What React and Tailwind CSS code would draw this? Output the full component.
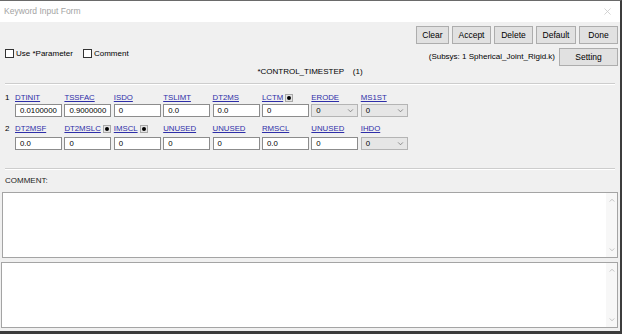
import React from "react";

const row1 = [
  { label: "DTINIT", value: "0.0100000" },
  { label: "TSSFAC", value: "0.9000000" },
  { label: "ISDO", value: "0" },
  { label: "TSLIMT", value: "0.0" },
  { label: "DT2MS", value: "0.0" },
  { label: "LCTM", value: "0", dot: true },
  { label: "ERODE", value: "0", select: true },
  { label: "MS1ST", value: "0", select: true },
];

const row2 = [
  { label: "DT2MSF", value: "0.0" },
  { label: "DT2MSLC", value: "0", dot: true },
  { label: "IMSCL", value: "0", dot: true },
  { label: "UNUSED", value: "0" },
  { label: "UNUSED", value: "0" },
  { label: "RMSCL", value: "0.0" },
  { label: "UNUSED", value: "0" },
  { label: "IHDO", value: "0", select: true },
];

const Chevron = ({ up = false, className = "" }) => (
  <svg viewBox="0 0 8 5" className={className} fill="none" stroke="currentColor" strokeWidth="1">
    {up ? <path d="M1 4.5 L4 1.5 L7 4.5" /> : <path d="M1 0.5 L4 3.5 L7 0.5" />}
  </svg>
);

const DotButton = () => (
  <span className="ml-[2px] flex h-[8px] w-[8px] items-center justify-center border border-[#a8a8a8] bg-[#e4e4e4]">
    <span className="h-[4px] w-[4px] rounded-full bg-black" />
  </span>
);

const Field = ({ item, labelClass }) => (
  <div className="flex flex-col">
    <div className={`flex items-center ${labelClass}`}>
      <span className="text-[7.8px] leading-none text-[#2e2ea8] underline">{item.label}</span>
      {item.dot && <DotButton />}
    </div>
    {item.select ? (
      <div className="flex h-[13px] w-[47px] items-center justify-between border border-[#b4b4b4] bg-[#e6e6e6] pl-[4px] pr-[3px]">
        <span className="text-[7.8px] leading-none text-black">{item.value}</span>
        <Chevron className="h-[4px] w-[7px] text-[#777]" />
      </div>
    ) : (
      <div className="flex h-[13px] w-[47px] items-center border border-[#8c8c8c] bg-white pl-[4px]">
        <span className="text-[7.8px] leading-none text-black">{item.value}</span>
      </div>
    )}
  </div>
);

const FieldRow = ({ num, items, labelClass, className }) => (
  <div className={`flex ${className}`}>
    <div className={`flex w-[15px] items-center pl-[5px] ${labelClass}`}>
      <span className="text-[8px] leading-none text-black">{num}</span>
    </div>
    <div className="grid grid-cols-[repeat(8,49.4px)]">
      {items.map((item, i) => (
        <Field key={i} item={item} labelClass={labelClass} />
      ))}
    </div>
  </div>
);

const Btn = ({ children, w }) => (
  <button className={`flex h-[18px] items-center justify-center border border-[#adadad] bg-[#e1e1e1] text-[8.5px] text-black ${w}`}>
    {children}
  </button>
);

const TextBox = ({ className }) => (
  <div className={`flex h-[66px] border border-[#a4a4a4] bg-white ${className}`}>
    <div className="flex-1" />
    <div className="flex w-[11px] flex-col items-center justify-between bg-[#f7f7f7] py-[5px]">
      <Chevron up className="h-[4px] w-[6px] text-[#b0b0b0]" />
      <Chevron className="h-[4px] w-[6px] text-[#b0b0b0]" />
    </div>
  </div>
);

const Separator = ({ className }) => (
  <div className={`mx-[5px] border-t border-b border-t-[#cdcdcd] border-b-white ${className}`} />
);

export default function App() {
  return (
    <div
      className="flex h-[334px] w-[622px] flex-col overflow-hidden border-t border-r-2 border-b-[3px] border-t-[#6a6a6a] border-r-[#3c3c3c] border-b-[#3c3c3c] bg-[#f0f0f0]"
      style={{ fontFamily: '"Liberation Sans", Arial, sans-serif' }}
    >
      <div className="flex h-[21px] items-center justify-between bg-white pl-[4px] pr-[9px]">
        <span className="text-[8.5px] text-[#a3a3a3]">Keyword Input Form</span>
        <svg viewBox="0 0 8 8" className="h-[7px] w-[7px] text-[#c8c8c8]" stroke="currentColor" strokeWidth="0.9">
          <path d="M0.5 0.5 L7.5 7.5 M7.5 0.5 L0.5 7.5" />
        </svg>
      </div>

      <div className="mt-[4px] flex justify-end gap-[3px] pr-[2px]">
        <Btn w="w-[33px]">Clear</Btn>
        <Btn w="w-[39px]">Accept</Btn>
        <Btn w="w-[39px]">Delete</Btn>
        <Btn w="w-[40px]">Default</Btn>
        <Btn w="w-[39px]">Done</Btn>
      </div>

      <div className="mt-[4px] flex justify-between pr-[2px]">
        <div className="mt-[1px] flex h-[9px] items-center pl-[5px]">
          <span className="h-[9px] w-[9px] border border-[#333] bg-white" />
          <span className="ml-[2px] text-[8px] text-black">Use *Parameter</span>
          <span className="ml-[10px] h-[9px] w-[9px] border border-[#333] bg-white" />
          <span className="ml-[2px] text-[8px] text-black">Comment</span>
        </div>
        <div className="flex items-center gap-[4px]">
          <span className="text-[8px] text-black">(Subsys: 1 Spherical_Joint_Rigid.k)</span>
          <Btn w="w-[59px]">Setting</Btn>
        </div>
      </div>

      <div className="flex h-[12px] items-center justify-center">
        <span className="whitespace-pre text-[8px] text-black">*CONTROL_TIMESTEP    (1)</span>
      </div>

      <Separator className="mt-[5px]" />

      <FieldRow num="1" items={row1} labelClass="h-[12px]" className="mt-[7px]" />
      <FieldRow num="2" items={row2} labelClass="h-[15px] pt-[3px] mb-[2px]" className="mt-[3px]" />

      <Separator className="mt-[18px]" />

      <div className="mt-[5px] flex h-[12px] items-center pl-[5px]">
        <span className="text-[8px] text-[#222]">COMMENT:</span>
      </div>

      <TextBox className="ml-[2px] mr-[2px] mt-[5px]" />
      <TextBox className="ml-[1px] mr-[2px] mt-[4px]" />
    </div>
  );
}
